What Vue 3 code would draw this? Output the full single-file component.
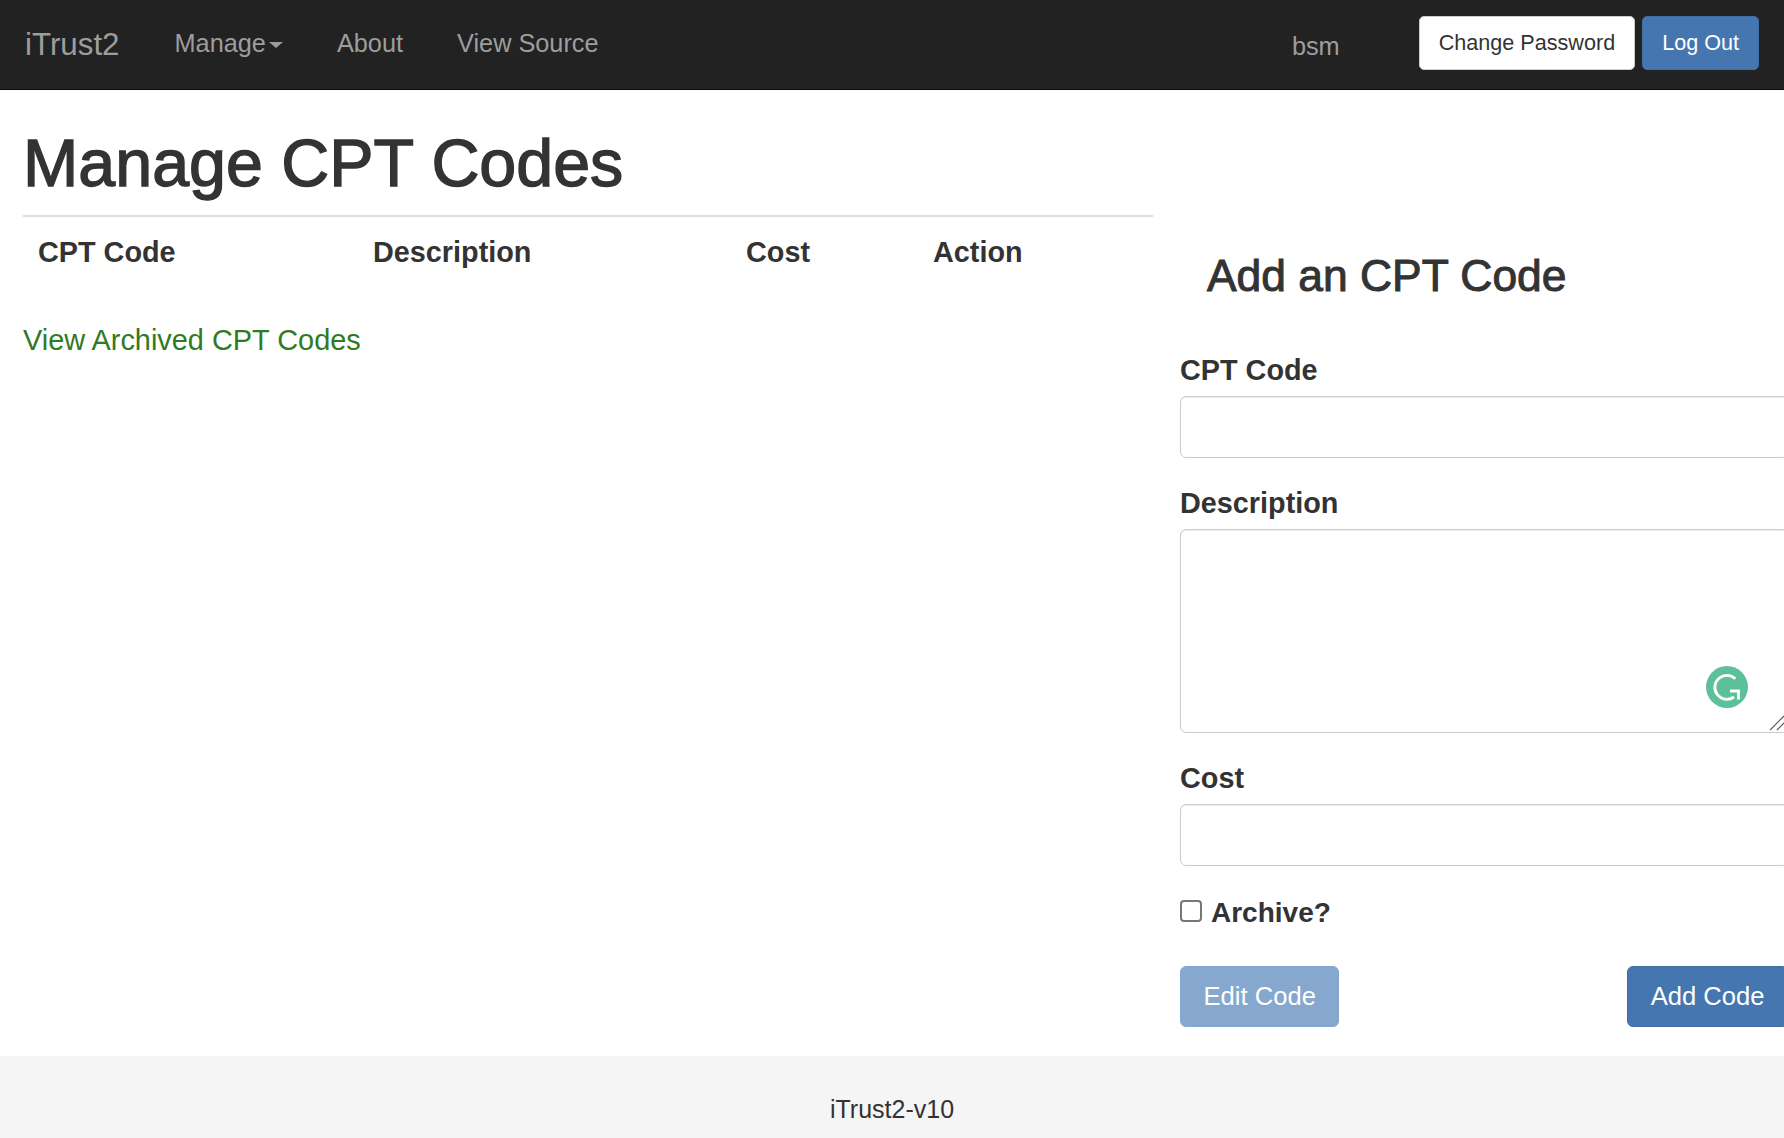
<template>
  <div class="page">
    <nav class="navbar">
      <a class="brand">iTrust2</a>
      <ul class="nav-links">
        <li v-for="link in navLinks" :key="link.label">
          {{ link.label }}<span v-if="link.caret" class="caret"></span>
        </li>
      </ul>
      <span class="username">bsm</span>
      <button class="btn-sm btn-white">Change Password</button>
      <button class="btn-sm btn-blue">Log Out</button>
    </nav>

    <main class="content">
      <section class="list-col">
        <h1>Manage CPT Codes</h1>
        <table class="codes-table">
          <thead>
            <tr>
              <th v-for="col in columns" :key="col.label" :class="col.cls">{{ col.label }}</th>
            </tr>
          </thead>
        </table>
        <a class="archived-link">View Archived CPT Codes</a>
      </section>

      <section class="form-col">
        <h3>Add an CPT Code</h3>
        <label class="field-label first">CPT Code</label>
        <input class="field-input" type="text" />
        <label class="field-label">Description</label>
        <div class="textarea-wrap">
          <textarea class="field-area"></textarea>
          <svg class="grammarly" width="42" height="42" viewBox="0 0 42 42">
            <circle cx="21" cy="21" r="21" fill="#5cc09b" />
            <path d="M29.3 12.8A12 12 0 1 0 28 31" fill="none" stroke="#fff" stroke-width="2.8" />
            <path d="M24 25H32.5V33.5" fill="none" stroke="#fff" stroke-width="2.8" />
          </svg>
          <svg class="resizer" width="16" height="16" viewBox="0 0 16 16">
            <path d="M0 15L14 1M7 15L14 8" fill="none" stroke="#555" stroke-width="1.2" />
          </svg>
        </div>
        <label class="field-label">Cost</label>
        <input class="field-input" type="text" />
        <label class="archive-row">
          <input class="archive-check" type="checkbox" />
          <span>Archive?</span>
        </label>
        <div class="form-actions">
          <button class="btn-lg btn-disabled">Edit Code</button>
          <button class="btn-lg btn-blue">Add Code</button>
        </div>
      </section>
    </main>

    <footer class="footer">iTrust2-v10</footer>
  </div>
</template>

<script setup>
const navLinks = [
  { label: 'Manage', caret: true },
  { label: 'About' },
  { label: 'View Source' },
];

const columns = [
  { label: 'CPT Code', cls: 'col-code' },
  { label: 'Description', cls: 'col-desc' },
  { label: 'Cost', cls: 'col-cost' },
  { label: 'Action', cls: 'col-action' },
];
</script>

<style>
html,
body {
  margin: 0;
  overflow: hidden;
  background: #fff;
}
</style>

<style scoped>
.page {
  display: flex;
  flex-direction: column;
  width: 1784px;
  height: 1138px;
  overflow: hidden;
  font-family: "Liberation Sans", Arial, sans-serif;
  color: #333;
}

.navbar {
  display: flex;
  align-items: center;
  flex: none;
  box-sizing: border-box;
  height: 90px;
  padding: 0 25px;
  background: #222;
  border-bottom: 1px solid #080808;
}

.brand {
  font-size: 31.3px;
  line-height: 36px;
  color: #9d9d9d;
}

.nav-links {
  display: flex;
  gap: 54px;
  margin: 0 0 2px 55px;
  padding: 0;
  list-style: none;
  font-size: 25.3px;
  color: #9d9d9d;
}

.caret {
  display: inline-block;
  margin-left: 3px;
  vertical-align: middle;
  border-top: 6px solid #9d9d9d;
  border-left: 7px solid transparent;
  border-right: 7px solid transparent;
}

.username {
  margin: 3px 79px 0 auto;
  font-size: 25.3px;
  color: #9d9d9d;
}

.btn-sm {
  box-sizing: border-box;
  height: 54px;
  margin-bottom: 3px;
  padding: 0 19px;
  border-radius: 5px;
  font-family: inherit;
  font-size: 21.6px;
}

.btn-sm + .btn-sm {
  margin-left: 7px;
}

.btn-white {
  background: #fff;
  color: #333;
  border: 1px solid #ccc;
}

.btn-blue {
  background: #4676b0;
  color: #fff;
  border: 1px solid #3f6ca4;
}

.content {
  display: flex;
  flex: 1;
  min-height: 0;
}

.list-col {
  flex: none;
  box-sizing: border-box;
  width: 1130px;
  margin-left: 23px;
}

h1 {
  margin: 37px 0 0;
  padding-bottom: 16px;
  border-bottom: 2px solid #ddd;
  font-size: 66.4px;
  line-height: 72px;
  font-weight: 400;
  -webkit-text-stroke: 1.4px #333;
}

.codes-table {
  width: 100%;
  margin-top: 15px;
  border-collapse: collapse;
  table-layout: fixed;
}

.codes-table th {
  padding: 0 0 0 15px;
  font-size: 28.8px;
  line-height: 40px;
  text-align: left;
}

.col-code {
  width: 320px;
}

.col-desc {
  width: 358px;
}

.col-cost {
  width: 172px;
}

.archived-link {
  display: block;
  margin-top: 48px;
  font-size: 28.9px;
  line-height: 40px;
  color: #2f7b1f;
}

.form-col {
  flex: none;
  box-sizing: border-box;
  width: 608px;
  margin-left: 27px;
}

h3 {
  margin: 162px 0 0 27px;
  font-size: 44.4px;
  line-height: 48px;
  font-weight: 400;
  -webkit-text-stroke: 1px #333;
}

.field-label {
  display: block;
  margin: 25px 0 6px;
  font-size: 28.8px;
  line-height: 40px;
  font-weight: 700;
}

.field-label.first {
  margin-top: 50px;
}

.field-input,
.field-area {
  display: block;
  box-sizing: border-box;
  width: 100%;
  border: 1px solid #ccc;
  border-radius: 6px;
  box-shadow: inset 0 1px 1px rgba(0, 0, 0, 0.075);
  outline: none;
  background: #fff;
}

.field-input {
  height: 62px;
}

.textarea-wrap {
  position: relative;
}

.field-area {
  height: 204px;
  resize: none;
}

.grammarly {
  position: absolute;
  left: 526px;
  top: 137px;
}

.resizer {
  position: absolute;
  left: 590px;
  top: 186px;
}

.archive-row {
  display: flex;
  align-items: center;
  margin-top: 27px;
  font-size: 28px;
  line-height: 40px;
  font-weight: 700;
}

.archive-check {
  appearance: none;
  box-sizing: border-box;
  width: 22px;
  height: 22px;
  margin: 0 9px 5px 0;
  border: 2px solid #767676;
  border-radius: 4px;
  background: #fff;
}

.form-actions {
  display: flex;
  justify-content: space-between;
  margin-top: 33px;
}

.btn-lg {
  box-sizing: border-box;
  height: 61px;
  padding: 0 22.5px;
  border-radius: 6px;
  font-family: inherit;
  font-size: 25.6px;
}

.btn-disabled {
  background: #87a8ce;
  color: #fff;
  border: 1px solid #87a8ce;
}

.footer {
  flex: none;
  box-sizing: border-box;
  height: 82px;
  padding-top: 38px;
  background: #f5f5f5;
  font-size: 25px;
  line-height: 30px;
  text-align: center;
}
</style>
